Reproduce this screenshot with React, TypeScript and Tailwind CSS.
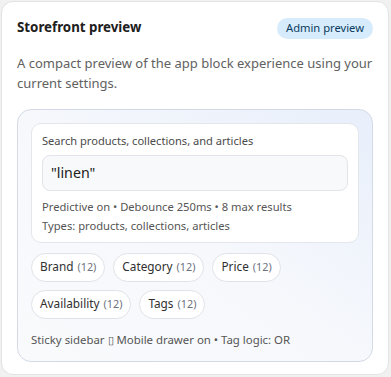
import type { FC } from 'react';

const facets = [
  [
    { label: 'Brand', count: 12 },
    { label: 'Category', count: 12 },
    { label: 'Price', count: 12 },
  ],
  [
    { label: 'Availability', count: 12 },
    { label: 'Tags', count: 12 },
  ],
];

const FacetChip: FC<{ label: string; count: number }> = ({ label, count }) => (
  <span className="flex h-[29px] items-center gap-[4px] rounded-full border border-[#dfe3e8] bg-white px-[8px] text-[11.8px] text-[#303030]">
    {label}
    <span className="text-[10.8px] text-[#6b7280]">({count})</span>
  </span>
);

export default function App() {
  return (
    <div className="min-h-[377px] bg-[#f1f1f1] p-px font-['Noto_Sans','Open_Sans',sans-serif]">
      <div className="h-[374px] w-[388px] rounded-xl border border-[#e3e3e3] bg-white px-[15px] pt-[16px]">
        <div className="flex items-center justify-between">
          <h2 className="text-[13.3px] font-bold text-[#202020]">Storefront preview</h2>
          <span className="rounded-full bg-[#d6ecfd] px-[9px] py-[2px] text-[11.2px] text-[#0b3b5e]">
            Admin preview
          </span>
        </div>
        <p className="mt-[14px] text-[13px] leading-5 text-[#616161]">
          A compact preview of the app block experience using your current settings.
        </p>

        <div className="mt-[16px] rounded-[14px] border border-[#d3dae6] bg-gradient-to-bl from-[#e8effb] via-[#f6f8fc] to-[#f9fafc] p-[13px]">
          <div className="rounded-[10px] border border-[#e3e6ea] bg-white px-[10px] pb-[7px] pt-[9px]">
            <div className="text-[11.1px] leading-[16px] text-[#4a4a4a]">
              Search products, collections, and articles
            </div>
            <div className="mt-[6px] flex h-[36px] items-center rounded-[8px] border border-[#e1e4e8] bg-[#f8f9fb] px-[8px] text-[14.2px] text-[#202020]">
              "linen"
            </div>
            <div className="mt-[6px] text-[11.2px] leading-[19px] text-[#555]">
              Predictive on • Debounce 250ms • 8 max results
            </div>
            <div className="text-[11.2px] leading-[19px] text-[#555]">
              Types: products, collections, articles
            </div>
          </div>

          <div className="mt-[10px] flex flex-col gap-[8px]">
            {facets.map((row, i) => (
              <div key={i} className="flex gap-[8px]">
                {row.map((f) => (
                  <FacetChip key={f.label} label={f.label} count={f.count} />
                ))}
              </div>
            ))}
          </div>

          <div className="mt-[13px] text-[11.4px] leading-4 text-[#555]">
            Sticky sidebar {'\u25AF'} Mobile drawer on • Tag logic: OR
          </div>
        </div>
      </div>
    </div>
  );
}
